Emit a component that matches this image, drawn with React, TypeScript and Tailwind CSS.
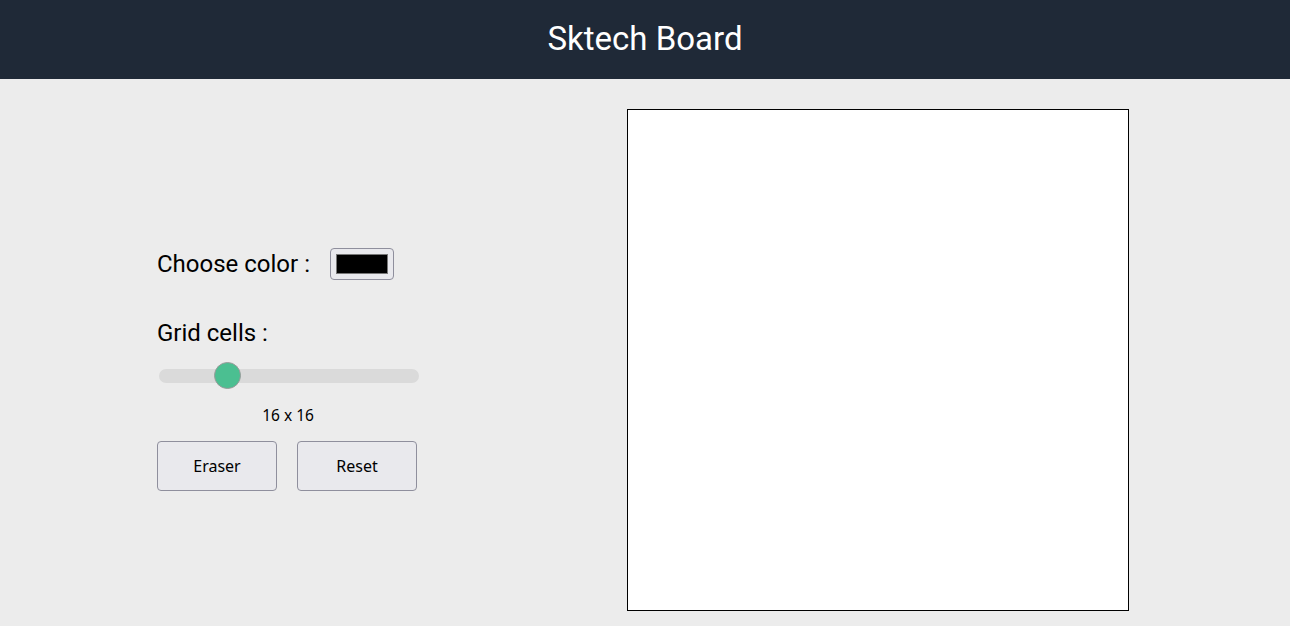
import { useState } from "react";

export default function App() {
  const [cells] = useState(16);

  return (
    <div className="min-h-screen bg-[#ececec] font-['Roboto',sans-serif]">
      <header className="h-[79px] bg-[#1f2937] flex items-center justify-center pb-[3px]">
        <h1 className="text-[33px] leading-none text-white font-normal">Sktech Board</h1>
      </header>

      <main className="flex justify-center items-start gap-[208px] pt-[30px] pr-1">
        {/* controls */}
        <div className="w-[262px] mt-[139px] flex flex-col">
          <div className="flex items-center h-8 gap-5">
            <span className="text-[24px] leading-[28px] text-black">Choose color :</span>
            <div className="w-16 h-8 rounded-[4px] border border-[#8f8f9d] bg-[#e9e9ed] flex items-center justify-center">
              <div className="w-[52px] h-5 bg-black border border-[#777]" />
            </div>
          </div>

          <span className="mt-[39px] text-[24px] leading-[28px] text-black">Grid cells :</span>

          <div className="relative mt-[15px] ml-0.5 w-[260px] h-[28px] flex items-center">
            <div className="w-full h-[14px] rounded-full bg-[#dadada]" />
            <div className="absolute left-[55px] top-0 w-[27px] h-[27px] rounded-full bg-[#4bbf91] border border-[#9a9a9a]" />
          </div>

          <span className="mt-[15px] text-center text-[15.5px] leading-5 text-black font-['Noto_Sans',sans-serif]">
            {cells} x {cells}
          </span>

          <div className="mt-4 flex gap-5 font-['Noto_Sans',sans-serif]">
            <button className="w-[120px] h-[50px] rounded-[4px] border border-[#8f8f9d] bg-[#e9e9ed] text-base text-black">
              Eraser
            </button>
            <button className="w-[120px] h-[50px] rounded-[4px] border border-[#8f8f9d] bg-[#e9e9ed] text-base text-black">
              Reset
            </button>
          </div>
        </div>

        {/* drawing board */}
        <div className="w-[502px] h-[502px] border border-black bg-white" />
      </main>
    </div>
  );
}
